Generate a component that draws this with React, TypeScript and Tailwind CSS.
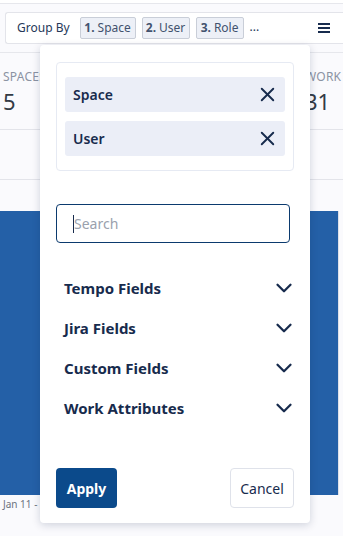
import { X, ChevronDown } from 'lucide-react';

const font = { fontFamily: '"Noto Sans", "Open Sans", sans-serif' };

const chips = [
  { n: '1.', label: 'Space', w: 'w-[56px]' },
  { n: '2.', label: 'User', w: 'w-[48px]' },
  { n: '3.', label: 'Role', w: 'w-[48px]' },
];

const selected = ['Space', 'User'];
const sections = ['Tempo Fields', 'Jira Fields', 'Custom Fields', 'Work Attributes'];

function Toolbar() {
  return (
    <div className="ml-[5px] mt-[8px] h-[32px] flex items-center rounded-l-[3px] border border-r-0 border-[#e3e4ea] bg-white pl-[11px]">
      <span className="text-[12px] text-[#253858] mr-[10px]">Group By</span>
      <div className="flex items-center gap-[6px]">
        {chips.map((c) => (
          <span
            key={c.label}
            className={`${c.w} h-[22px] flex items-center justify-center rounded-[2px] border border-[#c9ced8] bg-[#edf0f7] text-[12px] text-[#42526e]`}
          >
            <b className="font-bold mr-[3px]">{c.n}</b>
            {c.label}
          </span>
        ))}
        <span className="text-[12px] text-[#253858] -mt-[2px]">...</span>
      </div>
      <div className="ml-auto mr-[13px] flex flex-col gap-[2px]">
        <span className="block w-[12px] h-[2px] bg-[#172b4d]" />
        <span className="block w-[12px] h-[2px] bg-[#172b4d]" />
        <span className="block w-[12px] h-[2px] bg-[#172b4d]" />
      </div>
    </div>
  );
}

function Background() {
  return (
    <div className="flex flex-col">
      <div className="h-[4px] border-b border-[#e6e7ec] bg-white" />
      <Toolbar />
      <div className="mt-[8px] border-t border-[#e6e7ec] bg-[#fafafd]">
        <div className="h-[77px] flex border-b border-[#e3e4ea]">
          <div className="pl-[3px] pt-[17px] w-[302px]">
            <div className="text-[12px] leading-[14px] text-[#8b93a3] tracking-[0.02em]">SPACES</div>
            <div className="text-[22px] leading-[26px] text-[#333a45] mt-[4px]">5</div>
          </div>
          <div className="pl-[3px] pt-[17px]">
            <div className="text-[12px] leading-[14px] text-[#8b93a3] tracking-[0.02em]">WORK</div>
            <div className="text-[22px] leading-[26px] text-[#333a45] mt-[4px]">31</div>
          </div>
        </div>
        <div className="h-[50px] border-b border-[#e3e4ea]" />
      </div>
      <div className="bg-[#fafafd] pt-[31px] pr-[4px]">
        <div className="h-[284px] bg-[#2460a7] border-r border-[#dfe1e8]" />
        <div className="text-[10px] text-[#6b7280] pl-[3px] pt-[2px]">Jan 11 -</div>
      </div>
    </div>
  );
}

function Popover() {
  return (
    <div className="absolute left-[40px] top-[45px] w-[270px] h-[478px] rounded-[4px] bg-white shadow-[0_2px_8px_rgba(9,30,66,0.18)] px-[16px] pt-[17px] flex flex-col">
      <div className="rounded-[4px] border border-[#e6eaf3] px-[8px] py-[14px] flex flex-col gap-[9px]">
        {selected.map((s) => (
          <div key={s} className="h-[35px] rounded-[3px] bg-[#ebeef7] flex items-center pl-[8px] pr-[6px]">
            <span className="text-[14px] font-semibold text-[#172b4d]">{s}</span>
            <X className="ml-auto text-[#172b4d]" size={23} strokeWidth={2} />
          </div>
        ))}
      </div>
      <div className="mt-[33px] h-[39px] w-[234px] rounded-[4px] border border-[#0b3a6e] flex items-center pl-[16px]">
        <span className="w-[1px] h-[18px] bg-[#172b4d]" />
        <span className="text-[14px] text-[#9aa1ad]">Search</span>
      </div>
      <div className="mt-[25px] flex flex-col pl-[8px]">
        {sections.map((s) => (
          <div key={s} className="h-[40px] flex items-center">
            <span className="text-[15px] font-bold text-[#172b4d]">{s}</span>
            <ChevronDown className="ml-auto -mr-[3px] text-[#172b4d]" size={26} strokeWidth={2.1} />
          </div>
        ))}
      </div>
      <div className="mt-auto mb-[15px] flex items-center justify-between">
        <button className="h-[40px] w-[61px] rounded-[4px] bg-[#0b4a8b] text-white text-[14px] font-bold">
          Apply
        </button>
        <button className="h-[40px] w-[64px] rounded-[4px] border border-[#dfe2ea] bg-white text-[14px] text-[#172b4d]">
          Cancel
        </button>
      </div>
    </div>
  );
}

export default function App() {
  return (
    <div className="relative w-[343px] h-[536px] overflow-hidden bg-[#fafafd]" style={font}>
      <Background />
      <Popover />
    </div>
  );
}
